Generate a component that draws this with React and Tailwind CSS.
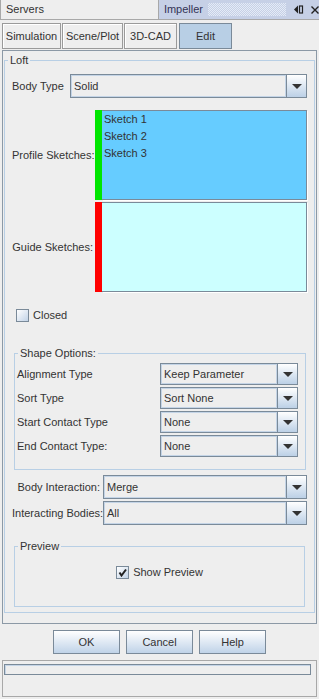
import React from "react";

const textBase = "[font-family:'Liberation_Sans',Arial,sans-serif] text-[11px] text-[#333333]";

function Arrow() {
  return (
    <svg width="10" height="5" viewBox="0 0 10 5">
      <polygon points="0,0 10,0 5,5" fill="#333333" />
    </svg>
  );
}

function Combo({ value, className }) {
  return (
    <div className={"flex border border-[#7a8a99] bg-[#eeeeee] " + className}>
      <div className="flex-1 flex items-center pl-[3px] shadow-[inset_1px_1px_0_#c4d4e6,inset_-1px_-1px_0_#c4d4e6]">
        {value}
      </div>
      <div className="w-[20px] flex items-center justify-center border-l border-[#7a8a99] bg-linear-to-b from-white to-[#bcd0e6]">
        <Arrow />
      </div>
    </div>
  );
}

function CheckBox({ checked }) {
  return (
    <div className="w-[13px] h-[13px] shrink-0 border border-[#7a8a99] bg-linear-to-br from-white to-[#c2d3e7] flex items-center justify-center">
      {checked && (
        <svg width="9" height="9" viewBox="0 0 9 9">
          <path d="M1.5 4.5 L3.5 7.5 L8 1.5" stroke="#222222" strokeWidth="2" fill="none" />
        </svg>
      )}
    </div>
  );
}

function Group({ title, className, children }) {
  return (
    <fieldset className={"border border-[#b8cfe5] min-w-0 " + className}>
      <legend className="ml-[3px] px-[2px] leading-[13px]">{title}</legend>
      {children}
    </fieldset>
  );
}

function Tab({ label, active, className }) {
  return (
    <div
      className={
        "h-full flex items-center justify-center border " +
        (active
          ? "bg-[#b8cfe5] border-[#7a8a99] "
          : "bg-[#eeeeee] border-[#9a9a9a] shadow-[inset_1px_1px_0_#ffffff] ") +
        className
      }
    >
      {label}
    </div>
  );
}

function Button({ label }) {
  return (
    <div className="w-[67px] h-[24px] flex items-center justify-center border border-[#7a8a99] bg-linear-to-b from-white to-[#c0d3e8]">
      {label}
    </div>
  );
}

const shapeRows = [
  { label: "Alignment Type", value: "Keep Parameter" },
  { label: "Sort Type", value: "Sort None" },
  { label: "Start Contact Type", value: "None" },
  { label: "End Contact Type:", value: "None" },
];

export default function App() {
  return (
    <div className={"w-[319px] h-[699px] overflow-hidden bg-[#eeeeee] flex flex-col whitespace-nowrap " + textBase}>
      {/* title strip */}
      <div className="h-[20px] flex border-b border-[#a8a8a8]">
        <div className="w-[159px] flex items-center pl-[5px] border-l border-r border-[#a8a8a8]">
          Servers
        </div>
        <div className="flex-1 flex items-center bg-[#c6d0e6] pl-[5px] text-[#333355]">
          <span>Impeller</span>
          <div className="ml-[5px] w-[78px] h-[13px] bg-[conic-gradient(#e4ebf6_25%,transparent_0_50%,#e4ebf6_0_75%,transparent_0)] bg-[length:2px_2px]" />
          <svg className="ml-[8px]" width="10" height="9" viewBox="0 0 10 9">
            <polygon points="0,4.5 4,0.5 4,8.5" fill="#222222" />
            <rect x="5.5" y="1" width="3" height="7" fill="none" stroke="#222222" strokeWidth="1.2" />
          </svg>
          <svg className="ml-[7px]" width="8" height="8" viewBox="0 0 8 8">
            <path d="M0.5 0.5 L7.5 7.5 M7.5 0.5 L0.5 7.5" stroke="#222222" strokeWidth="1.4" />
          </svg>
        </div>
      </div>

      {/* tool tabs */}
      <div className="mt-[3px] h-[26px] flex gap-[1px] pl-[2px]">
        <Tab label="Simulation" className="w-[59px]" />
        <Tab label="Scene/Plot" className="w-[61px]" />
        <Tab label="3D-CAD" className="w-[53px]" />
        <Tab label="Edit" active className="w-[53px] ml-[1px]" />
      </div>

      {/* main panel */}
      <div className="mt-[1px] mx-[2px] h-[574px] border border-[#8c99a6] px-[1px] pt-[3px]">
        <Group title="Loft" className="">
          <div className="flex flex-col px-[7px] pt-[7px] pb-[5px]">
            <div className="flex h-[24px] items-center">
              <div className="w-[58px]">Body Type</div>
              <Combo value="Solid" className="flex-1 h-full" />
            </div>

            <div className="mt-[12px] flex h-[90px]">
              <div className="w-[83px] self-center text-right pr-[2px]">Profile Sketches:</div>
              <div className="w-[7px] bg-[#00e600]" />
              <div className="flex-1 bg-[#66ccff] border-t border-r border-b border-[#7a8a99] shadow-[1px_1px_0_#ffffff] pl-[2px] leading-[17px]">
                <div>Sketch 1</div>
                <div>Sketch 2</div>
                <div>Sketch 3</div>
              </div>
            </div>

            <div className="mt-[2px] flex h-[90px]">
              <div className="w-[83px] self-center text-right pr-[2px]">Guide Sketches:</div>
              <div className="w-[7px] bg-[#ff0000]" />
              <div className="flex-1 bg-[#ccffff] border-t border-r border-b border-[#7a8a99] shadow-[1px_1px_0_#ffffff]" />
            </div>

            <div className="mt-[17px] h-[13px] flex items-center pl-[4px] gap-[4px]">
              <CheckBox />
              <span>Closed</span>
            </div>

            <Group title="Shape Options:" className="mt-[25px] ml-[2px] mr-[1px]">
              <div className="flex flex-col gap-[2px] pl-[2px] pr-[6px] pt-[3px] pb-[12px]">
                {shapeRows.map((row) => (
                  <div key={row.label} className="flex h-[22px] items-center">
                    <div className="w-[143px]">{row.label}</div>
                    <Combo value={row.value} className="w-[138px] h-full" />
                  </div>
                ))}
              </div>
            </Group>

            <div className="mt-[5px] flex h-[24px] items-center">
              <div className="w-[88px] text-right">Body Interaction:</div>
              <Combo value="Merge" className="ml-[3px] flex-1 h-full" />
            </div>
            <div className="mt-[2px] flex h-[24px] items-center">
              <div className="w-[88px] text-right">Interacting Bodies:</div>
              <Combo value="All" className="ml-[3px] flex-1 h-full" />
            </div>

            <Group title="Preview" className="mt-[15px] ml-[2px] mr-[2px]">
              <div className="flex items-center justify-center gap-[4px] h-[13px] mt-[13px] mb-[27px]">
                <CheckBox checked />
                <span>Show Preview</span>
              </div>
            </Group>
          </div>
        </Group>
      </div>

      {/* dialog buttons */}
      <div className="mt-[6px] flex justify-center gap-[6px]">
        <Button label="OK" />
        <Button label="Cancel" />
        <Button label="Help" />
      </div>

      {/* status */}
      <div className="mt-[6px] mx-[2px] h-[37px] border border-[#a8a8a8] pt-[3px] pl-[1px]">
        <div className="w-[307px] h-[11px] border border-[#7a8a99] shadow-[inset_1px_1px_0_#c4d4e6]" />
      </div>
    </div>
  );
}
